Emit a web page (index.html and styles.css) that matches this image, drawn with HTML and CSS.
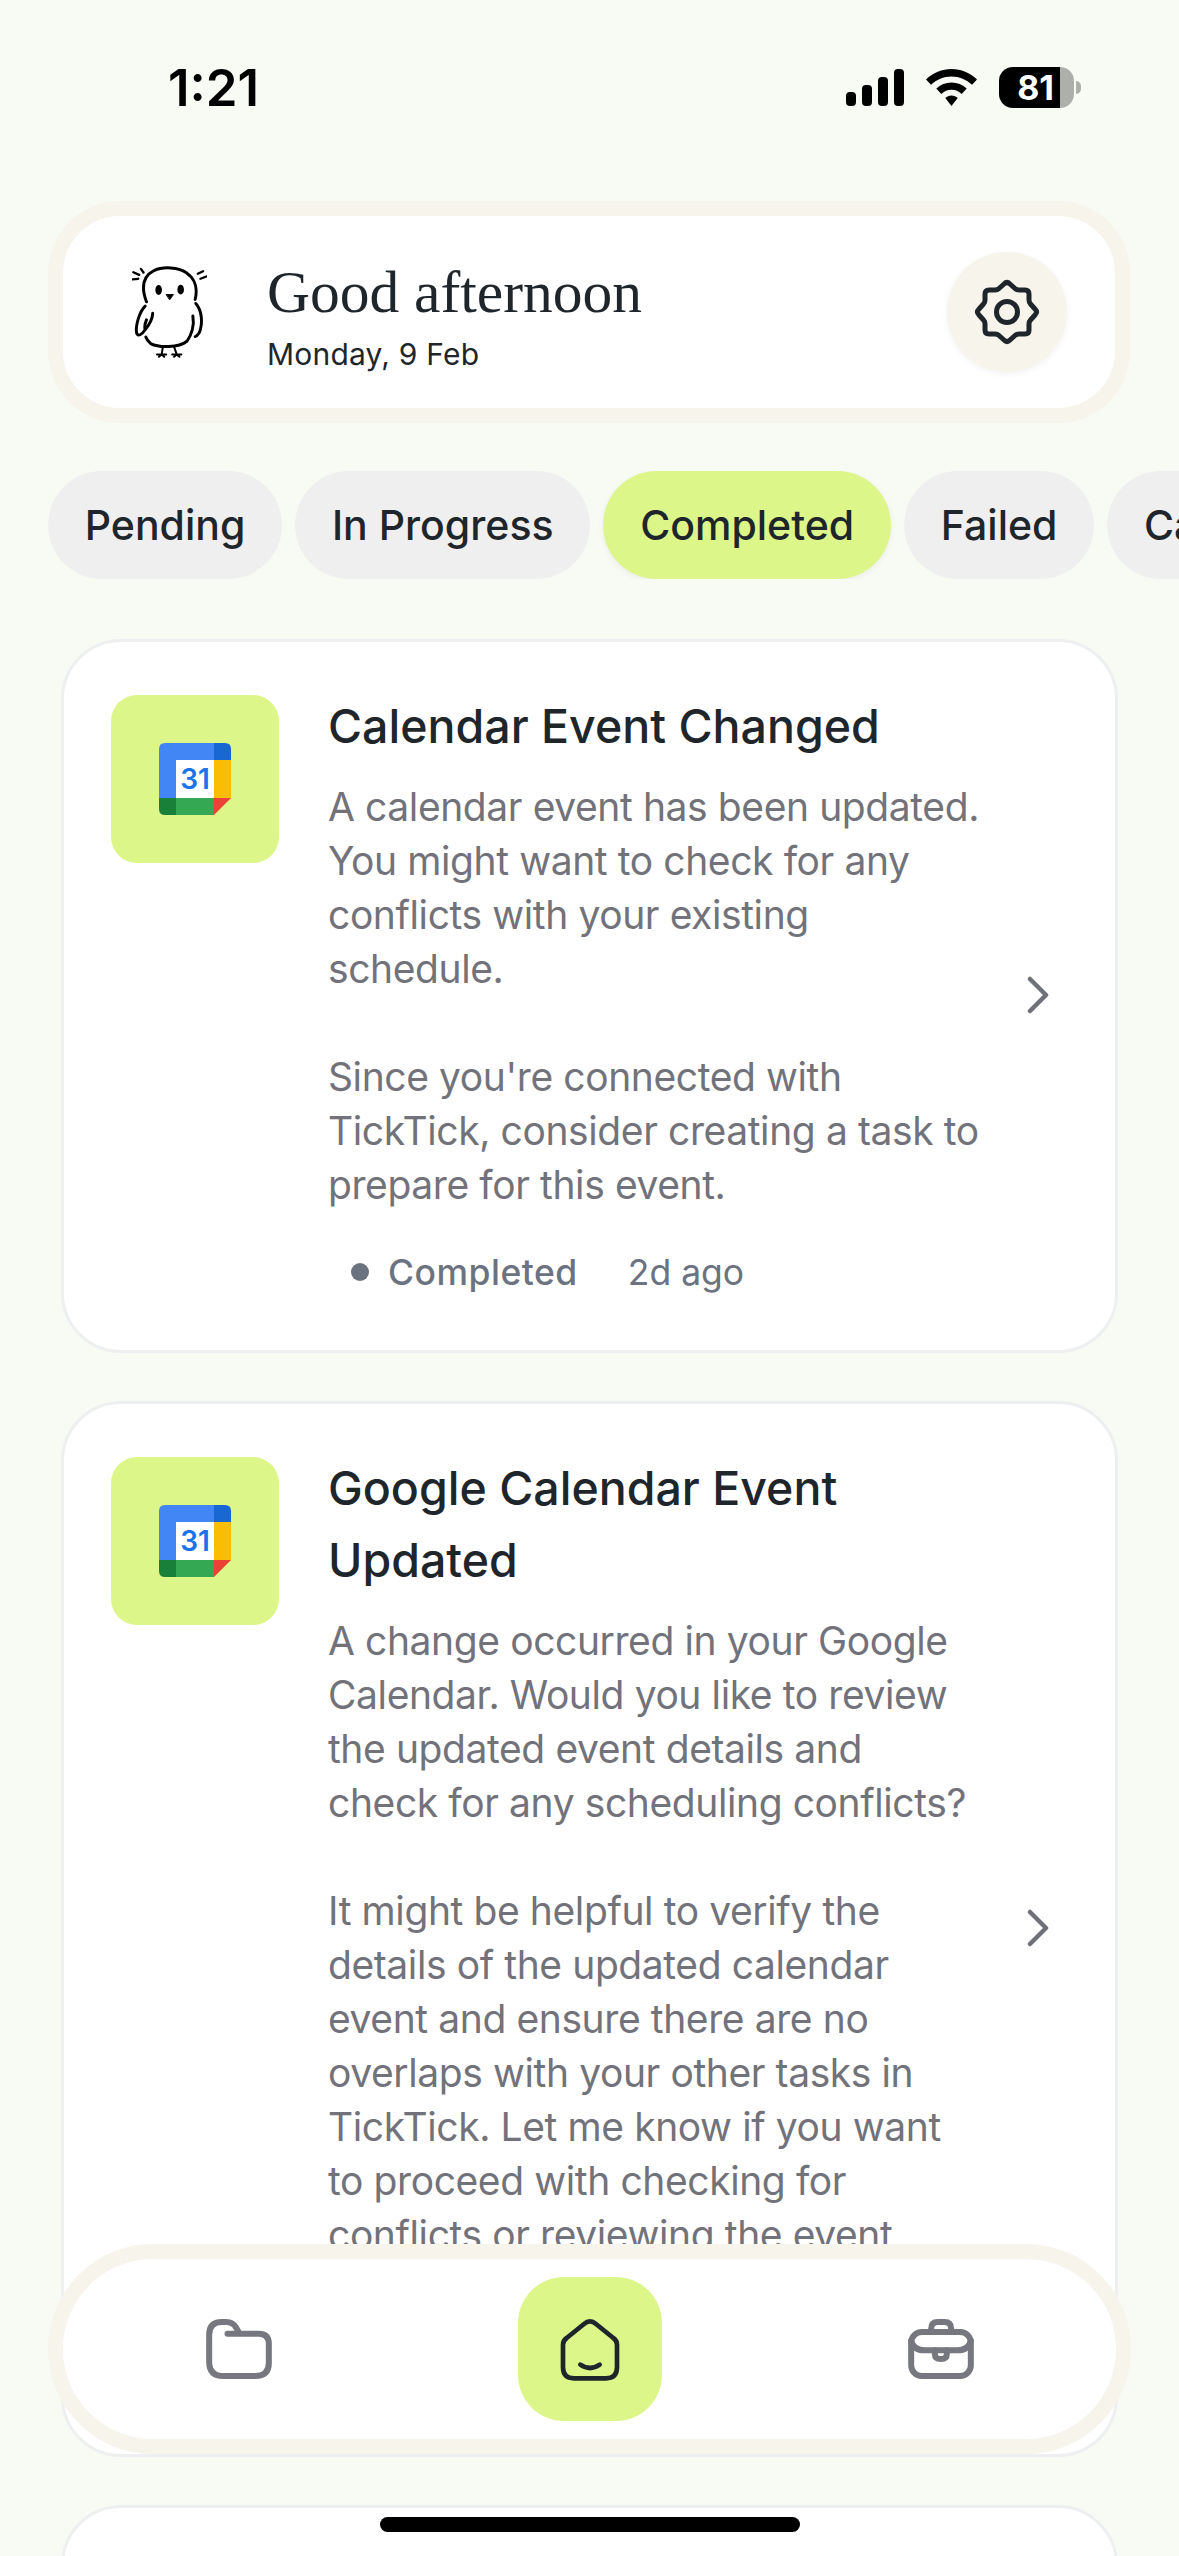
FILE: index.html
```html
<!DOCTYPE html>
<html lang="en">
<head>
  <meta charset="UTF-8">
  <meta name="viewport" content="width=device-width, initial-scale=1.0">
  <title>Tasks</title>
  <link rel="stylesheet" href="styles.css">
</head>
<body>
  <div class="screen">
    <div class="status-bar">
      <span class="time">1:21</span>
      <div class="status-icons">
        <svg class="signal" width="58" height="37" viewBox="0 0 58 37">
          <rect x="0" y="23" width="10" height="14" rx="4"/>
          <rect x="16" y="16" width="10" height="21" rx="4"/>
          <rect x="32" y="8" width="10" height="29" rx="4"/>
          <rect x="48" y="0" width="10" height="37" rx="4"/>
        </svg>
        <svg class="wifi" width="51" height="37" viewBox="0 0 51 37">
          <path d="M25.500 0C35 0 44 3.800 51 10.500L46 15.800C40.500 10.500 33.300 7.400 25.500 7.400C17.700 7.400 10.500 10.500 5 15.800L0 10.500C7 3.800 16 0 25.500 0Z"/>
          <path d="M25.500 13.500C31.300 13.500 36.600 15.800 40.700 19.600L35.700 24.900C33 22.400 29.400 20.800 25.500 20.800C21.600 20.800 18 22.400 15.300 24.900L10.300 19.600C14.400 15.800 19.700 13.500 25.500 13.500Z"/>
          <path d="M25.500 26.500C27.900 26.500 30 27.400 31.700 28.900L25.500 37L19.300 28.900C21 27.400 23.100 26.500 25.500 26.500Z"/>
        </svg>
        <div class="battery">
          <div class="battery-body">
            <span class="battery-level">81</span>
            <span class="battery-rest"></span>
          </div>
          <span class="battery-nub"></span>
        </div>
      </div>
    </div>

    <header class="header">
      <svg class="bird" width="75" height="92" viewBox="218 138 228 276" fill="none" stroke="#000" stroke-width="9" stroke-linecap="round" stroke-linejoin="round">
        <path d="M262 245C245 200 250 168 285 150C310 138 360 138 385 158C410 175 418 205 410 238"/>
        <path d="M222 155L240 163M245 145L253 156M219 177L237 175M418 160L434 152M426 175L444 168" stroke-width="7"/>
        <path d="M258 258C240 275 228 320 232 340C236 352 248 345 258 330C270 315 280 300 281 280M258 330C255 322 258 310 262 300"/>
        <path d="M412 250C430 270 435 310 422 340C418 346 414 350 410 351"/>
        <path d="M403 288C408 315 400 345 385 365C360 385 300 385 275 372C268 366 262 358 260 352"/>
        <path d="M312 382L308 405M294 405L322 405M308 405L300 412M308 405L316 412M346 382L354 405M340 405L368 405M354 405L346 412M354 405L362 412" stroke-width="6"/>
        <ellipse cx="299" cy="209" rx="10" ry="15" fill="#000" stroke="none"/>
        <ellipse cx="366" cy="208" rx="10" ry="15" fill="#000" stroke="none"/>
        <path d="M323 223L344 223L333 238Z" fill="#000" stroke-width="3"/>
      </svg>
      <div class="greeting">
        <h1 class="greeting-title">Good afternoon</h1>
        <p class="greeting-date">Monday, 9 Feb</p>
      </div>
      <button class="settings" aria-label="Settings">
        <svg width="66" height="66" viewBox="-33 -33 66 66" fill="none" stroke="#1f262b" stroke-width="5" stroke-linejoin="round">
          <path d="M-3 -28Q0 -31 3 -28L8 -23.500Q9.500 -22 12 -22L18 -22Q22 -22 22 -18L22 -12Q22 -9.500 23.500 -8L28 -3Q31 0 28 3L23.500 8Q22 9.500 22 12L22 18Q22 22 18 22L12 22Q9.500 22 8 23.500L3 28Q0 31 -3 28L-8 23.500Q-9.500 22 -12 22L-18 22Q-22 22 -22 18L-22 12Q-22 9.500 -23.500 8L-28 3Q-31 0 -28 -3L-23.500 -8Q-22 -9.500 -22 -12L-22 -18Q-22 -22 -18 -22L-12 -22Q-9.500 -22 -8 -23.500Z"/>
          <circle r="10.500"/>
        </svg>
      </button>
    </header>

    <nav class="chips">
      <span class="chip">Pending</span>
      <span class="chip">In Progress</span>
      <span class="chip chip-active">Completed</span>
      <span class="chip">Failed</span>
      <span class="chip">Cancelled</span>
    </nav>

    <main class="list">
      <article class="card">
        <div class="tile">
          <svg width="72" height="72" viewBox="0 0 72 72">
            <path d="M6 0H55V17H17V55H0V6Q0 0 6 0Z" fill="#4285f4"/>
            <path d="M55 0H66Q72 0 72 6V17H55Z" fill="#1967d2"/>
            <rect x="17" y="17" width="38" height="38" fill="#fff"/>
            <rect x="55" y="17" width="17" height="38" fill="#fbbc04"/>
            <rect x="17" y="55" width="38" height="17" fill="#34a853"/>
            <path d="M0 55H17V72H6Q0 72 0 66Z" fill="#188038"/>
            <path d="M55 55H72L55 72Z" fill="#ea4335"/>
            <text x="36" y="46" text-anchor="middle" class="cal-day">31</text>
          </svg>
        </div>
        <div class="card-body">
          <h2 class="card-title">Calendar Event Changed</h2>
          <p class="card-text">A calendar event has been updated. You might want to check for any conflicts with your existing schedule.</p>
          <p class="card-text card-text-next">Since you're connected with TickTick, consider creating a task to prepare for this event.</p>
          <div class="meta">
            <span class="meta-dot"></span>
            <span class="meta-state">Completed</span>
            <span class="meta-time">2d ago</span>
          </div>
        </div>
        <svg class="chevron" width="24" height="38" viewBox="0 0 24 38" fill="none" stroke="#6f7178" stroke-width="4.500" stroke-linecap="round" stroke-linejoin="round">
          <path d="M4 3L20 19L4 35"/>
        </svg>
      </article>

      <article class="card">
        <div class="tile">
          <svg width="72" height="72" viewBox="0 0 72 72">
            <path d="M6 0H55V17H17V55H0V6Q0 0 6 0Z" fill="#4285f4"/>
            <path d="M55 0H66Q72 0 72 6V17H55Z" fill="#1967d2"/>
            <rect x="17" y="17" width="38" height="38" fill="#fff"/>
            <rect x="55" y="17" width="17" height="38" fill="#fbbc04"/>
            <rect x="17" y="55" width="38" height="17" fill="#34a853"/>
            <path d="M0 55H17V72H6Q0 72 0 66Z" fill="#188038"/>
            <path d="M55 55H72L55 72Z" fill="#ea4335"/>
            <text x="36" y="46" text-anchor="middle" class="cal-day">31</text>
          </svg>
        </div>
        <div class="card-body">
          <h2 class="card-title">Google Calendar Event Updated</h2>
          <p class="card-text">A change occurred in your Google Calendar. Would you like to review the updated event details and check for any scheduling conflicts?</p>
          <p class="card-text card-text-next">It might be helpful to verify the details of the updated calendar event and ensure there are no overlaps with your other tasks in TickTick. Let me know if you want to proceed with checking for conflicts or reviewing the event details.</p>
          <div class="meta">
            <span class="meta-dot"></span>
            <span class="meta-state">Completed</span>
            <span class="meta-time">2d ago</span>
          </div>
        </div>
        <svg class="chevron" width="24" height="38" viewBox="0 0 24 38" fill="none" stroke="#6f7178" stroke-width="4.500" stroke-linecap="round" stroke-linejoin="round">
          <path d="M4 3L20 19L4 35"/>
        </svg>
      </article>

      <article class="card card-empty"></article>
    </main>

    <nav class="tabbar">
      <a class="tab">
        <svg width="66" height="60" viewBox="78 58 197 180" fill="none" stroke="#77777f" stroke-width="18" stroke-linecap="round" stroke-linejoin="round">
          <path d="M142 102H235Q266 102 266 132V190Q266 229 225 229H130Q87 229 87 186V105Q87 67 125 67H138Q158 67 168 84L178 102"/>
        </svg>
      </a>
      <a class="tab">
        <span class="tab-active">
          <svg width="60" height="63" viewBox="180 170 180 189" fill="none" stroke="#1f262b" stroke-width="14" stroke-linecap="round" stroke-linejoin="round">
            <path d="M189 250Q189 238 200 230L252 188Q270 172 288 188L340 230Q351 238 351 250V318Q351 351 318 351H222Q189 351 189 318Z"/>
            <path d="M241 310Q270 330 299 310"/>
          </svg>
        </span>
      </a>
      <a class="tab">
        <svg width="66" height="60" viewBox="85 58 197 180" fill="none" stroke="#77777f" stroke-width="18" stroke-linecap="round" stroke-linejoin="round">
          <rect x="94" y="97" width="179" height="132" rx="32"/>
          <path d="M94 122Q100 152 135 152H232Q267 152 273 122"/>
          <path d="M154 97V87Q154 67 174 67H194Q214 67 214 87V97"/>
          <path d="M165 152V163Q165 178 183 178Q201 178 201 163V152"/>
        </svg>
      </a>
    </nav>

    <div class="home-indicator"></div>
  </div>
</body>
</html>
```

FILE: styles.css
```css
* {
  box-sizing: border-box;
}

body {
  margin: 0;
  background: #f8fbf4;
  color: #1f262b;
  font-family: Inter, "Noto Sans", sans-serif;
}

.screen {
  position: relative;
  width: 1179px;
  height: 2556px;
  overflow: hidden;
}

/* Status bar */
.status-bar {
  display: flex;
  justify-content: space-between;
  align-items: center;
  height: 174px;
  padding: 0 98px 0 168px;
}

.time {
  font-size: 51px;
  font-weight: 600;
  color: #000;
}

.status-icons {
  display: flex;
  align-items: center;
  gap: 22px;
}

.signal,
.wifi {
  fill: #000;
}

.battery {
  display: flex;
  align-items: center;
  gap: 2px;
}

.battery-body {
  display: flex;
  width: 75px;
  height: 41px;
  border-radius: 14px;
  overflow: hidden;
}

.battery-level {
  display: flex;
  justify-content: flex-end;
  align-items: center;
  width: 61px;
  padding-right: 6px;
  background: #000;
  color: #fff;
  font-size: 34px;
  font-weight: 700;
}

.battery-rest {
  flex: 1;
  background: #adb0aa;
}

.battery-nub {
  width: 5px;
  height: 13px;
  border-radius: 0 6px 6px 0;
  background: #adb0aa;
}

/* Header card */
.header {
  display: flex;
  align-items: center;
  height: 222px;
  margin: 27px 49px 0 48px;
  padding: 0 48px 0 69px;
  background: #fff;
  border: 15px solid #f7f4ec;
  border-radius: 72px;
}

.greeting {
  flex: 1;
  margin-left: 60px;
  padding-top: 3px;
}

.greeting-title {
  margin: 0;
  font-family: "Liberation Serif", serif;
  font-size: 59.500px;
  font-weight: 400;
  line-height: 72px;
}

.greeting-date {
  margin: 8px 0 0;
  font-size: 30px;
  letter-spacing: 0.2px;
  line-height: 36px;
}

.settings {
  display: flex;
  justify-content: center;
  align-items: center;
  width: 120px;
  height: 120px;
  padding: 0;
  border: 0;
  border-radius: 50%;
  background: #f7f4ec;
  box-shadow: 0 2px 6px rgba(0, 0, 0, 0.05);
}

/* Filter chips */
.chips {
  display: flex;
  gap: 13px;
  margin-top: 48px;
  padding-left: 48px;
  overflow: hidden;
}

.chip {
  flex-shrink: 0;
  height: 108px;
  padding: 0 36.800px;
  border-radius: 54px;
  background: #efefef;
  font-size: 41px;
  font-weight: 500;
  line-height: 108px;
}

.chip-active {
  background: #ddf68a;
  box-shadow: 0 2px 6px rgba(0, 0, 0, 0.06);
}

/* Task cards */
.list {
  display: flex;
  flex-direction: column;
  gap: 48px;
  margin-top: 60px;
  padding: 0 61px;
}

.card {
  display: flex;
  align-items: center;
  padding: 48px 65px 51px 47px;
  background: #fff;
  border: 3px solid #eeeff0;
  border-radius: 60px;
}

.card-empty {
  height: 300px;
  flex-shrink: 0;
}

.tile {
  display: flex;
  justify-content: center;
  align-items: center;
  flex-shrink: 0;
  align-self: flex-start;
  width: 168px;
  height: 168px;
  margin: 5px 49px 0 0;
  border-radius: 26px;
  background: #ddf68a;
}

.cal-day {
  font-family: Inter, sans-serif;
  font-size: 28px;
  font-weight: 600;
  fill: #1a73e8;
}

.card-body {
  flex: 1;
}

.card-title {
  margin: 0 0 18px;
  font-size: 46.500px;
  font-weight: 500;
  line-height: 72px;
}

.card-text {
  max-width: 652px;
  margin: 0;
  color: #72727a;
  font-size: 39px;
  letter-spacing: -0.400px;
  line-height: 54px;
}

.card-text-next {
  margin-top: 54px;
}

.meta {
  display: flex;
  align-items: center;
  height: 54px;
  margin-top: 33px;
  padding-left: 23px;
  color: #6b7280;
  font-size: 35.500px;
}

.meta-dot {
  width: 18px;
  height: 18px;
  border-radius: 50%;
  background: #6b7280;
}

.meta-state {
  margin-left: 19px;
  font-weight: 500;
  letter-spacing: 0.500px;
}

.meta-time {
  margin-left: 50px;
}

.chevron {
  flex-shrink: 0;
  margin-left: 40px;
}

/* Bottom tab bar */
.tabbar {
  position: absolute;
  left: 48px;
  top: 2244px;
  display: flex;
  width: 1083px;
  height: 210px;
  padding-left: 1px;
  background: #fff;
  border: 15px solid #f7f4ec;
  border-radius: 105px;
}

.tab {
  display: flex;
  flex: 1;
  justify-content: center;
  align-items: center;
}

.tab-active {
  display: flex;
  justify-content: center;
  align-items: center;
  width: 144px;
  height: 144px;
  border-radius: 46px;
  background: #ddf68a;
}

.home-indicator {
  position: absolute;
  left: 380px;
  top: 2517px;
  width: 420px;
  height: 15px;
  border-radius: 8px;
  background: #000;
}
```
